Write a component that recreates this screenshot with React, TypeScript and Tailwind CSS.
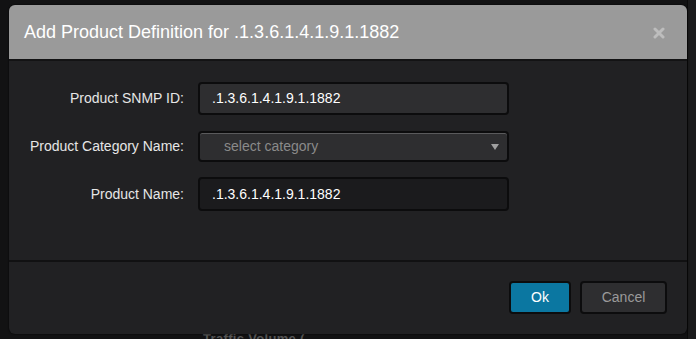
import React from "react";

export default function App() {
  const font = { fontFamily: '"Liberation Sans", Arial, sans-serif' };
  return (
    <div className="w-[696px] h-[339px] bg-[#121213] pt-[5px] pl-[9px] relative overflow-hidden" style={font}>
      <div className="absolute left-[203px] top-[332px] text-[13px] leading-[14px] text-[#555] font-bold tracking-wide">Traffic Volume (</div>
      <div className="absolute right-0 top-0 w-[9px] h-[339px] bg-[#1a1a1b] border-l border-[#0a0a0a]"></div>
      <div className="relative w-[678px] h-[329px] rounded-[6px] bg-[#212123] flex flex-col overflow-hidden shadow-[0_0_2px_#000]">
        <div className="h-[56px] bg-[#9a9a9a] border-b-2 border-[#131314] flex items-center justify-between pl-[15px] pr-[22px] shrink-0">
          <span className="text-[18px] text-white leading-none">Add Product Definition for .1.3.6.1.4.1.9.1.1882</span>
          <svg width="12" height="12" viewBox="0 0 12 12" className="mt-[2px]">
            <path d="M2 2 L10 10 M10 2 L2 10" stroke="#bdbdbd" strokeWidth="3" strokeLinecap="round" />
          </svg>
        </div>
        <div className="h-[201px] border-b-2 border-[#111112] pt-[21px] flex flex-col shrink-0">
          <div className="flex items-center h-[33px]">
            <div className="w-[175px] text-right text-[14px] text-[#e6e6e6]">Product SNMP ID:</div>
            <div className="ml-[14px] w-[311px] h-[33px] rounded-[4px] border-2 border-[#0c0c0d] bg-[#2e2e30] flex items-center pl-[12px] text-[14px] text-white">.1.3.6.1.4.1.9.1.1882</div>
          </div>
          <div className="flex items-center h-[31px] mt-[16px]">
            <div className="w-[175px] text-right text-[14px] text-[#e6e6e6]">Product Category Name:</div>
            <div className="ml-[14px] w-[311px] h-[31px] rounded-[4px] border-2 border-[#0c0c0d] bg-[#2e2e30] shadow-[inset_0_1px_0_#5a5a5c] flex items-center justify-between pl-[24px] pr-[8px] text-[14px] text-[#8a8a8a]">
              <span>select category</span>
              <svg width="8" height="6" viewBox="0 0 8 6"><path d="M0 0 H8 L4 6 Z" fill="#a0a0a0" /></svg>
            </div>
          </div>
          <div className="flex items-center h-[34px] mt-[15px]">
            <div className="w-[175px] text-right text-[14px] text-[#e6e6e6]">Product Name:</div>
            <div className="ml-[14px] w-[311px] h-[34px] rounded-[4px] border-2 border-[#0c0c0d] bg-[#1b1b1d] flex items-center pl-[12px] text-[14px] text-white">.1.3.6.1.4.1.9.1.1882</div>
          </div>
        </div>
        <div className="flex-1 flex justify-end items-start pt-[19px] pr-[20px] gap-[9px]">
          <button className="w-[62px] h-[33px] rounded-[4px] border-2 border-[#0c0c0d] bg-[#0b77a1] text-white text-[14px]">Ok</button>
          <button className="w-[87px] h-[33px] rounded-[4px] border-2 border-[#0c0c0d] bg-[#2e2e30] text-[#9a9a9a] text-[14px]">Cancel</button>
        </div>
      </div>
    </div>
  );
}
